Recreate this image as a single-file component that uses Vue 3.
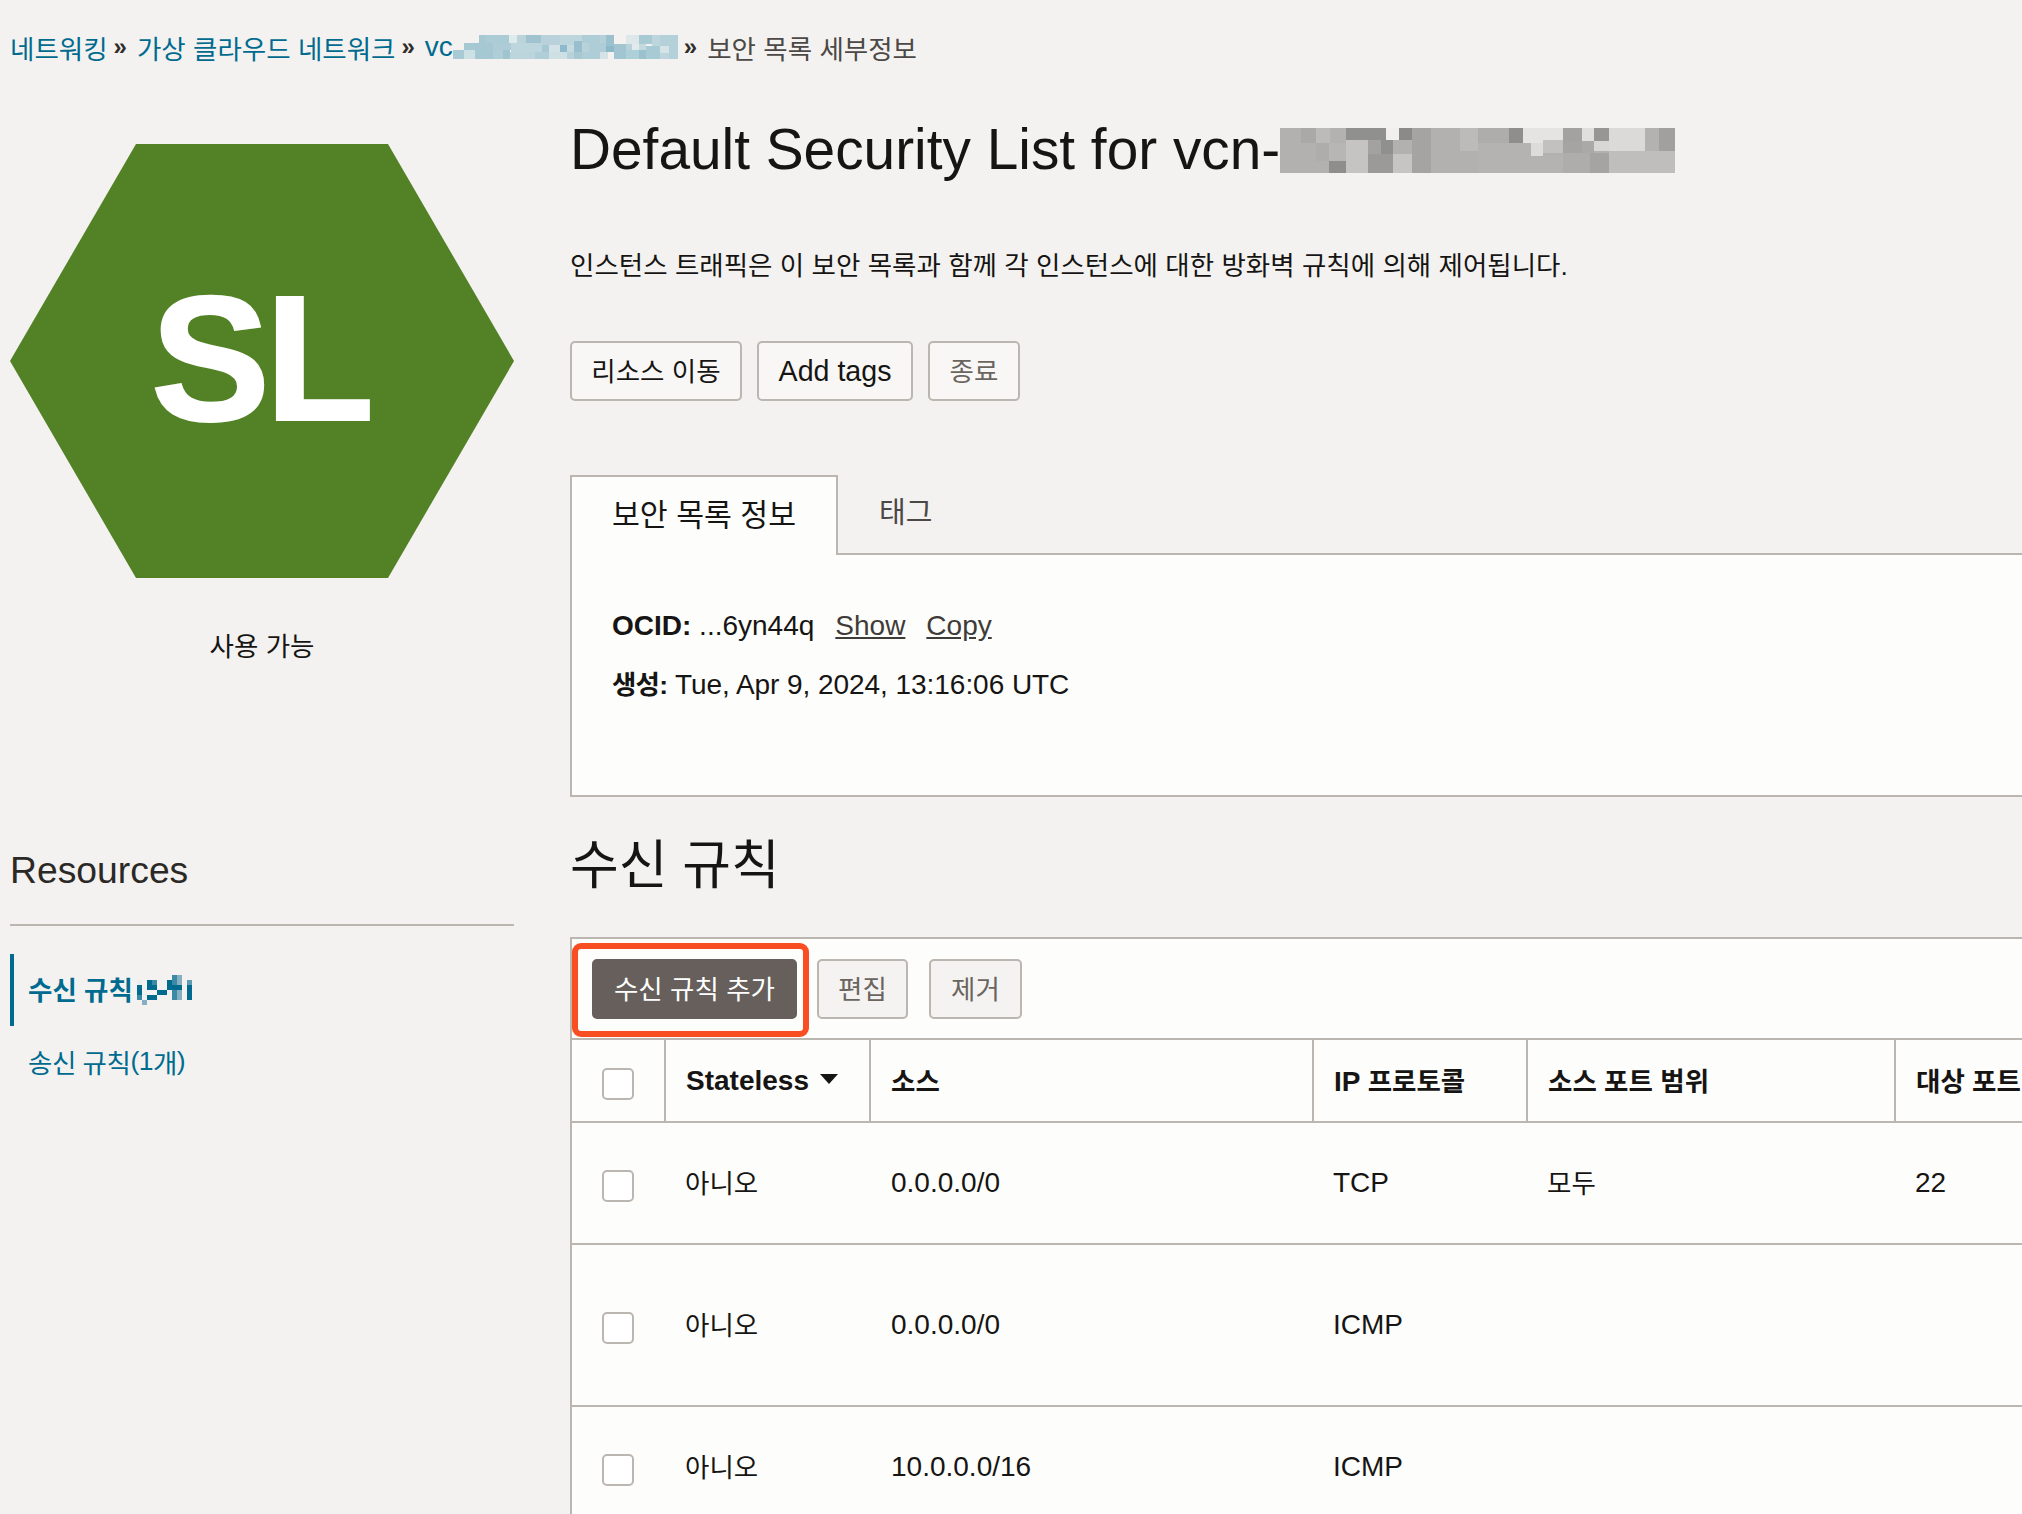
<script setup>
const toRects = (list) =>
  list.map(([x, y, width, height, fill]) => ({ x, y, width, height, fill }))

const titleMosaic = toRects([
  [18, 21, 1185, 135, '#b2b1af'],
  [81, 21, 45, 45, '#aaa9a7'],
  [126, 21, 42, 45, '#bcbbb9'],
  [168, 21, 48, 45, '#b3b2b0'],
  [216, 21, 120, 36, '#90908e'],
  [336, 21, 39, 36, '#f1f0ee'],
  [375, 21, 39, 36, '#8b8a88'],
  [414, 21, 57, 135, '#a5a4a2'],
  [558, 21, 54, 69, '#bcbbb9'],
  [612, 21, 93, 45, '#aeadab'],
  [705, 21, 42, 45, '#8f8e8c'],
  [747, 21, 120, 45, '#e5e4e2'],
  [612, 66, 159, 90, '#b4b3b1'],
  [771, 105, 96, 51, '#b4b3b1'],
  [771, 66, 36, 39, '#dddcda'],
  [807, 57, 60, 39, '#c2c1bf'],
  [867, 21, 57, 39, '#a3a2a0'],
  [924, 21, 36, 39, '#e0dfdd'],
  [960, 21, 45, 39, '#979694'],
  [1005, 21, 108, 69, '#dbdad8'],
  [1113, 21, 42, 69, '#b3b2b0'],
  [1155, 21, 48, 69, '#a1a09e'],
  [867, 60, 57, 36, '#a5a4a2'],
  [924, 60, 36, 36, '#aaa9a7'],
  [960, 60, 45, 30, '#d8d7d5'],
  [867, 96, 81, 60, '#aeadab'],
  [948, 96, 57, 60, '#a5a4a2'],
  [1005, 90, 198, 66, '#bfbebc'],
  [126, 66, 39, 54, '#aeadab'],
  [165, 66, 51, 54, '#b7b6b4'],
  [165, 120, 51, 36, '#8f8e8c'],
  [216, 57, 66, 99, '#c5c4c2'],
  [282, 57, 39, 42, '#a3a2a0'],
  [321, 57, 36, 42, '#90908e'],
  [357, 57, 57, 42, '#b2b1af'],
  [282, 99, 75, 57, '#9b9a98'],
  [357, 99, 57, 57, '#c6c5c3'],
])

const crumbMosaic = toRects([
  [102, 21, 18, 24, '#a6c8d3'],
  [120, 21, 72, 24, '#abcbd5'],
  [192, 21, 24, 24, '#deeaec'],
  [216, 21, 27, 24, '#bbd3db'],
  [243, 21, 45, 30, '#a0c3cf'],
  [288, 21, 57, 30, '#b8d1da'],
  [345, 21, 42, 30, '#bdd5dc'],
  [387, 21, 24, 18, '#bdd5dc'],
  [411, 21, 54, 24, '#aecdd6'],
  [465, 21, 18, 24, '#b6d0d8'],
  [483, 21, 24, 33, '#9cc1ce'],
  [543, 21, 39, 27, '#dee8ea'],
  [582, 21, 39, 27, '#a8cad4'],
  [621, 21, 24, 33, '#bdd5dc'],
  [645, 21, 54, 33, '#b4d0d9'],
  [57, 45, 87, 21, '#a6c8d3'],
  [144, 45, 54, 21, '#adccd6'],
  [198, 45, 93, 27, '#bdd5dc'],
  [291, 51, 21, 21, '#a6c8d3'],
  [312, 51, 33, 21, '#d2e2e6'],
  [345, 51, 21, 21, '#8fbace'],
  [366, 51, 21, 21, '#c6dbe0'],
  [387, 39, 24, 33, '#99bfcd'],
  [411, 45, 21, 27, '#b8d2da'],
  [432, 45, 51, 27, '#aecdd6'],
  [483, 54, 24, 18, '#8cb8c9'],
  [507, 48, 36, 45, '#a1c5d1'],
  [543, 48, 18, 18, '#b8d2da'],
  [561, 48, 21, 18, '#e1ebed'],
  [582, 48, 21, 18, '#c4dae0'],
  [603, 54, 42, 39, '#a8cad4'],
  [645, 54, 27, 21, '#d5e4e7'],
  [672, 54, 27, 21, '#b4d0d9'],
  [645, 75, 27, 18, '#bdd5dc'],
  [672, 75, 27, 18, '#b4d0d9'],
  [24, 66, 33, 27, '#a8cad4'],
  [57, 66, 33, 27, '#cde0e4'],
  [90, 66, 54, 27, '#a6c8d3'],
  [144, 66, 30, 27, '#b0ced7'],
  [174, 66, 21, 27, '#a0c4d0'],
  [195, 72, 75, 21, '#bcd4dc'],
  [270, 72, 42, 21, '#b0ced7'],
  [312, 72, 54, 21, '#cfe0e5'],
  [366, 72, 21, 21, '#b8d2da'],
  [387, 72, 24, 21, '#a6c8d3'],
  [411, 72, 54, 21, '#aecdd6'],
  [465, 72, 24, 21, '#d5e3e7'],
  [507, 66, 36, 27, '#a1c5d1'],
  [543, 66, 39, 27, '#add0d8'],
  [582, 66, 21, 27, '#9cc1ce'],
])

const navMosaic = toRects([
  [30, 33, 15, 15, '#e8eeee'],
  [30, 48, 15, 30, '#006b8f'],
  [30, 78, 15, 15, '#3d8aa6'],
  [45, 93, 15, 15, '#86b0c2'],
  [60, 33, 15, 30, '#006b8f'],
  [75, 33, 15, 15, '#3d8aa6'],
  [75, 48, 15, 15, '#006b8f'],
  [60, 78, 30, 15, '#006b8f'],
  [90, 63, 30, 15, '#006b8f'],
  [120, 33, 15, 30, '#006b8f'],
  [135, 18, 15, 30, '#3d8aa6'],
  [150, 18, 15, 30, '#86b0c2'],
  [135, 48, 30, 15, '#006b8f'],
  [135, 63, 15, 30, '#3d8aa6'],
  [150, 63, 15, 30, '#86b0c2'],
  [180, 33, 15, 15, '#5d9bb3'],
  [180, 48, 15, 45, '#006b8f'],
])

const rows = [
  { source: '0.0.0.0/0', protocol: 'TCP', sourcePort: '모두', destPort: '22', tall: false },
  { source: '0.0.0.0/0', protocol: 'ICMP', sourcePort: '', destPort: '', tall: true },
  { source: '10.0.0.0/16', protocol: 'ICMP', sourcePort: '', destPort: '', tall: false },
]
</script>

<template>
  <div class="page">
    <nav class="crumbs">
      <a class="link ko">네트워킹</a>
      <span class="sep">»</span>
      <a class="link ko">가상 클라우드 네트워크</a>
      <span class="sep">»</span>
      <a class="link vc">vc</a>
      <svg class="m-crumb" viewBox="24 21 675 72" shape-rendering="crispEdges">
        <rect v-for="(r, i) in crumbMosaic" :key="i" v-bind="r" />
      </svg>
      <span class="sep last">»</span>
      <span class="current ko">보안 목록 세부정보</span>
    </nav>

    <div class="columns">
      <aside class="side">
        <div class="hex">SL</div>
        <div class="status ko">사용 가능</div>
        <h3 class="res">Resources</h3>
        <div class="rule"></div>
        <ul class="nav">
          <li class="nav-item active">
            <span class="ko">수신 규칙</span>
            <svg class="m-nav" viewBox="30 18 165 90" shape-rendering="crispEdges">
              <rect v-for="(r, i) in navMosaic" :key="i" v-bind="r" />
            </svg>
          </li>
          <li class="nav-item">
            <span class="ko">송신 규칙</span><span class="paren">(1</span><span class="ko">개</span><span class="paren">)</span>
          </li>
        </ul>
      </aside>

      <main class="content">
        <div class="title">
          <h1>Default Security List for vcn-</h1>
          <svg class="m-title" viewBox="18 21 1185 135" shape-rendering="crispEdges">
            <rect v-for="(r, i) in titleMosaic" :key="i" v-bind="r" />
          </svg>
        </div>
        <p class="desc ko">인스턴스 트래픽은 이 보안 목록과 함께 각 인스턴스에 대한 방화벽 규칙에 의해 제어됩니다.</p>

        <div class="actions">
          <button class="btn b1 ko">리소스 이동</button>
          <button class="btn b2">Add tags</button>
          <button class="btn b3 ko">종료</button>
        </div>

        <div class="tabs">
          <div class="tab on ko">보안 목록 정보</div>
          <div class="tab off ko">태그</div>
        </div>
        <section class="info">
          <div class="line">
            <b>OCID:</b> ...6yn44q<a class="u">Show</a><a class="u">Copy</a>
          </div>
          <div class="line second">
            <b class="ko strong">생성:</b> Tue, Apr 9, 2024, 13:16:06 UTC
          </div>
        </section>

        <h2 class="heading">수신 규칙</h2>

        <section class="grid">
          <div class="toolbar">
            <button class="tbtn add ko">수신 규칙 추가</button>
            <button class="tbtn off1 ko">편집</button>
            <button class="tbtn off2 ko">제거</button>
            <div class="callout"></div>
          </div>
          <table>
            <colgroup>
              <col class="c1" /><col class="c2" /><col class="c3" /><col class="c4" /><col class="c5" /><col class="c6" />
            </colgroup>
            <thead>
              <tr>
                <th><span class="check"></span></th>
                <th>Stateless<i class="caret"></i></th>
                <th class="ko">소스</th>
                <th>IP <span class="ko">프로토콜</span></th>
                <th class="ko">소스 포트 범위</th>
                <th class="ko">대상 포트 범위</th>
              </tr>
            </thead>
            <tbody>
              <tr v-for="(row, i) in rows" :key="i" :class="{ tall: row.tall }">
                <td><span class="check"></span></td>
                <td class="ko">아니오</td>
                <td>{{ row.source }}</td>
                <td>{{ row.protocol }}</td>
                <td class="ko">{{ row.sourcePort }}</td>
                <td>{{ row.destPort }}</td>
              </tr>
            </tbody>
          </table>
        </section>
      </main>
    </div>
  </div>
</template>

<style>
html, body { margin: 0; background: #f3f2f0; }
</style>

<style scoped>
.page {
  width: 2022px;
  height: 1514px;
  overflow: hidden;
  padding-left: 10px;
  box-sizing: border-box;
  color: #161513;
  background: #f3f2f0;
  font-family: "Liberation Sans", "Noto Sans CJK KR", sans-serif;
  font-size: 28px;
}
.ko { font-size: 26.5px; font-weight: 400; }
.link, .nav-item { color: #006b8f; }

.crumbs { height: 94px; padding-bottom: 2px; display: flex; align-items: center; }
.sep { margin: 0 10px 0 6px; font-size: 24px; font-weight: 700; color: #312d2a; }
.sep.last { margin-left: 6px; }
.vc { font-size: 28px; }
.m-crumb { width: 225px; height: 24px; }
.current { color: #4b4845; }

.columns { display: flex; gap: 56px; }
.side { width: 504px; flex: none; }
.content { width: 1600px; flex: none; }

.hex {
  margin-top: 48px;
  height: 434px;
  box-sizing: border-box;
  padding: 0 4px 5px 0;
  background: #538226;
  clip-path: polygon(25% 0, 75% 0, 100% 50%, 75% 100%, 25% 100%, 0 50%);
  display: flex;
  align-items: center;
  justify-content: center;
  color: #fff;
  font-weight: 700;
  font-size: 179px;
  letter-spacing: -5px;
  line-height: 1;
  -webkit-text-stroke: 2px #fff;
}
.status { margin-top: 49px; text-align: center; line-height: 40px; }
.res {
  margin: 178px 0 0;
  font-size: 37.3px;
  font-weight: 400;
  line-height: 50px;
  color: #2b2926;
}
.rule { margin-top: 29px; height: 2px; background: #bcb6b1; }
.nav { list-style: none; margin: 28px 0 0; padding: 0; }
.nav-item {
  height: 72px;
  box-sizing: border-box;
  padding: 0 0 2px 18px;
  display: flex;
  align-items: center;
  letter-spacing: -0.5px;
}
.nav-item.active { border-left: 4px solid #006b8f; padding: 0 0 4px 14px; letter-spacing: 0; }
.nav-item.active .ko { font-weight: 700; }
.paren { font-size: 26.5px; }
.m-nav { width: 55px; height: 30px; margin: 3px 0 0 4px; }

.title { margin-top: 19px; display: flex; align-items: center; height: 70px; }
h1 { margin: 0; font-size: 56.8px; font-weight: 400; line-height: 70px; white-space: nowrap; }
.m-title { width: 395px; height: 45px; flex: none; }
.desc { margin: 61px 0 0; line-height: 40px; color: #161513; }

.actions { margin-top: 55px; display: flex; gap: 15px; }
.btn {
  height: 60px;
  padding: 0;
  border: 2px solid #bcb6b1;
  border-radius: 5px;
  background: #f8f7f5;
  color: #161513;
  font-family: inherit;
}
.btn.ko { padding-bottom: 3px; }
.b1 { width: 172px; }
.b2 { width: 156px; font-size: 28.6px; }
.b3 { width: 92px; color: #6b6560; }

.tabs { margin-top: 74px; display: flex; position: relative; z-index: 1; margin-bottom: -2px; }
.tab { height: 80px; box-sizing: border-box; }
.tab.on {
  width: 268px;
  padding-left: 40px;
  border: 2px solid #bcb6b1;
  border-bottom: none;
  background: #fdfdfb;
  font-size: 30.3px;
  line-height: 78px;
}
.tab.off { padding-left: 41px; line-height: 76px; color: #4b4845; font-size: 29px; }

.info {
  height: 244px;
  box-sizing: border-box;
  padding: 51px 0 0 40px;
  border: 2px solid #bcb6b1;
  background: #fdfdfb;
}
.line { line-height: 40px; white-space: nowrap; }
.line.second { margin-top: 19px; letter-spacing: -0.05px; }
.strong { font-weight: 700; letter-spacing: -0.8px; }
.u { color: #3f3b38; text-decoration: underline; margin-left: 21px; }

.heading { margin: 34px 0 0; line-height: 70px; font-size: 53px; font-weight: 400; }

.grid { margin-top: 36px; border: 2px solid #bcb6b1; background: #fdfdfb; }
.toolbar {
  position: relative;
  height: 99px;
  box-sizing: border-box;
  padding: 20px 0 0 20px;
  display: flex;
  align-items: flex-start;
  gap: 20px;
}
.tbtn {
  height: 60px;
  padding: 0 0 3px;
  border: 2px solid #bcb6b1;
  border-radius: 5px;
  background: #f4f3f1;
  color: #6b6560;
  font-family: inherit;
}
.add { width: 205px; background: #665f5b; border-color: #665f5b; color: #fff; }
.off1 { width: 91px; }
.off2 { width: 93px; margin-left: 1px; }
.callout {
  position: absolute;
  left: 0;
  top: 4px;
  width: 237px;
  height: 94px;
  box-sizing: border-box;
  border: 6px solid #f94d22;
  border-radius: 9px;
}

table {
  table-layout: fixed;
  border-collapse: separate;
  border-spacing: 0;
  width: 1600px;
  border-top: 2px solid #bcb6b1;
}
.c1 { width: 94px; } .c2 { width: 205px; } .c3 { width: 443px; }
.c4 { width: 214px; } .c5 { width: 368px; } .c6 { width: 276px; }
th, td {
  padding: 0 0 0 20px;
  text-align: left;
  border-bottom: 2px solid #bcb6b1;
  white-space: nowrap;
  box-sizing: border-box;
}
th { height: 83px; font-weight: 700; border-right: 2px solid #bcb6b1; }
th.ko, th .ko { font-weight: 700; }
th:nth-child(n+3) { padding-bottom: 2px; }
td { height: 122px; }
.tall td { height: 162px; }
th:first-child, td:first-child { padding-left: 30px; }
td:nth-child(2), td:nth-child(4), td:nth-child(5), td:nth-child(6) { padding-left: 19px; }
td.ko { padding-bottom: 4px; }
.check {
  display: block;
  width: 32px;
  height: 32px;
  box-sizing: border-box;
  margin-top: 6px;
  border: 2px solid #bcb6b1;
  border-radius: 5px;
  background: #fff;
}
.caret {
  display: inline-block;
  margin-left: 11px;
  vertical-align: 6px;
  border-left: 9.5px solid transparent;
  border-right: 9.5px solid transparent;
  border-top: 10px solid #161513;
}
</style>
